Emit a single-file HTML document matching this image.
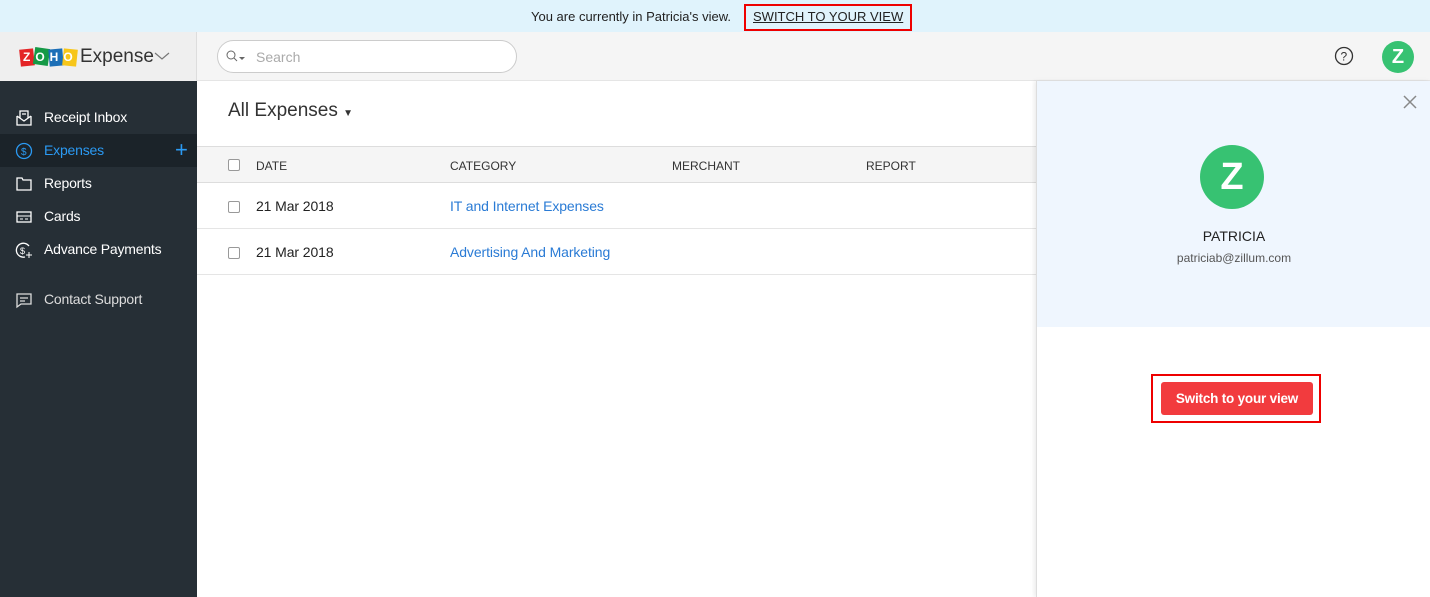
<!DOCTYPE html>
<html><head><style>
*{box-sizing:border-box;margin:0;padding:0}
body{width:1430px;height:597px;overflow:hidden;font-family:"Liberation Sans",sans-serif;background:#fff;position:relative;color:#222}
.banner{position:absolute;top:0;left:0;width:1430px;height:32px;background:#e0f3fc;font-size:13px;}
.banner .t{position:absolute;left:531px;top:9px}
.banner .b{position:absolute;left:744px;top:4px;width:168px;height:27px;border:2px solid #e00;padding:3px 0 0 7px;text-decoration:underline}
.side{position:absolute;top:32px;left:0;width:197px;height:565px;background:#262f36}
.logo{height:49px;background:#efefef;border-right:1px solid #ddd;position:relative}
.nav{position:absolute;left:0;width:197px;height:33px;color:#fff;font-size:14px;letter-spacing:-0.2px}
.nav span{position:absolute;left:44px;top:8px}
.nav svg{position:absolute;left:15px;top:8px}
.top{position:absolute;top:32px;left:197px;right:0;height:49px;background:#f5f5f5;border-bottom:1px solid #e5e5e5}
.search{position:absolute;left:20px;top:8px;width:300px;height:33px;border:1px solid #ccc;border-radius:17px;background:#fff}
.main{position:absolute;left:197px;top:81px;width:840px;height:516px}
.hdr{position:absolute;top:65px;left:0;width:840px;height:37px;background:#f5f5f5;border-top:1px solid #ddd;border-bottom:1px solid #ddd;font-size:12px;color:#333}
.row{position:absolute;left:0;width:840px;height:46px;border-bottom:1px solid #e5e5e5;font-size:14px;letter-spacing:-0.1px}
.cb{position:absolute;left:31px;width:12px;height:12px;border:1px solid #999;border-radius:2px;background:#fff}
.panel{position:absolute;left:1036px;top:81px;width:394px;height:516px;background:#fff;border-left:1px solid #ddd;box-shadow:-2px 0 4px rgba(0,0,0,.08)}
.pt{height:246px;background:#eff6fe;position:relative}
</style></head><body>
<div class="banner"><span class="t">You are currently in Patricia's view.</span><span class="b">SWITCH TO YOUR VIEW</span></div>
<div class="side">
 <div class="logo">
  <div style="position:absolute;left:20px;top:16px;width:58px;height:19px">
   <span style="position:absolute;left:0;top:1px;width:14px;height:17px;background:#e42527;transform:rotate(-6deg)"></span>
   <span style="position:absolute;left:14px;top:0;width:15px;height:17px;background:#159a46;transform:rotate(8deg)"></span>
   <span style="position:absolute;left:29px;top:1px;width:14px;height:17px;background:#1c6fb7;transform:rotate(-5deg)"></span>
   <span style="position:absolute;left:43px;top:1px;width:14px;height:17px;background:#f7c61a;transform:rotate(6deg)"></span>
   <span style="position:absolute;left:3px;top:2px;font:bold 12px 'Liberation Sans';color:#fff;letter-spacing:5px">ZOHO</span>
  </div>
  <span style="position:absolute;left:80px;top:14px;font-size:19px;color:#333">Expense</span>
  <svg style="position:absolute;left:154px;top:20px" width="16" height="9"><path d="M1 1l7 6 7-6" fill="none" stroke="#777" stroke-width="1.2"/></svg>
 </div>
 <div class="nav" style="top:69px"><svg width="18" height="18"><path d="M2 7v9h14V7M2 7l7 5 7-5M5 9V2h8v7M7 5h4" fill="none" stroke="#fff" stroke-width="1.3"/></svg><span>Receipt Inbox</span></div>
 <div class="nav" style="top:102px;background:#1b2329;color:#2b9af3"><svg width="18" height="18"><circle cx="9" cy="9" r="7.5" fill="none" stroke="#2b9af3" stroke-width="1.3"/><text x="6" y="13" font-size="10" fill="#2b9af3">$</text></svg><span>Expenses</span><span style="left:175px;top:3px;font-size:22px">+</span></div>
 <div class="nav" style="top:135px"><svg width="18" height="18"><path d="M2 3h5l1 2h8v10H2z" fill="none" stroke="#fff" stroke-width="1.3"/></svg><span>Reports</span></div>
 <div class="nav" style="top:168px"><svg width="18" height="18"><rect x="2" y="4" width="14" height="10" fill="none" stroke="#fff" stroke-width="1.3"/><path d="M2 8h14M5 11h3M10 11h3" stroke="#fff"/></svg><span>Cards</span></div>
 <div class="nav" style="top:201px"><svg width="18" height="18"><path d="M14 5A7 7 0 1 0 10 16" fill="none" stroke="#fff" stroke-width="1.3"/><text x="5" y="13" font-size="9" fill="#fff">$</text><path d="M14 11v6M11 14h6" stroke="#fff"/></svg><span>Advance Payments</span></div>
 <div class="nav" style="top:251px;color:#ddd"><svg width="18" height="18"><path d="M2 3h14v10H6l-4 3z M5 7h8M5 10h5" fill="none" stroke="#ddd" stroke-width="1.3"/></svg><span>Contact Support</span></div>
</div>
<div class="top">
 <div class="search"><svg style="position:absolute;left:8px;top:9px" width="20" height="14"><circle cx="5" cy="5" r="4" fill="none" stroke="#666"/><path d="M8 8l3 3" stroke="#666"/><path d="M13 7h6l-3 3z" fill="#666"/></svg><span style="position:absolute;left:38px;top:8px;font-size:14px;color:#aaa">Search</span></div>
 <svg style="position:absolute;left:1137px;top:14px" width="20" height="20"><circle cx="10" cy="10" r="8.5" fill="none" stroke="#333" stroke-width="1.3"/><text x="6.5" y="14.5" font-size="12" fill="#333">?</text></svg>
 <div style="position:absolute;left:1185px;top:9px;width:32px;height:32px;border-radius:50%;background:#37c272;color:#fff;font:bold 20px 'Liberation Sans';text-align:center;line-height:32px">Z</div>
</div>
<div class="main">
 <div style="position:absolute;left:31px;top:19px;font-size:19px;color:#333">All Expenses <span style="font-size:10px">▼</span></div>
 <div class="hdr"><div class="cb" style="top:12px"></div><span style="position:absolute;left:59px;top:12px">DATE</span><span style="position:absolute;left:253px;top:12px">CATEGORY</span><span style="position:absolute;left:475px;top:12px">MERCHANT</span><span style="position:absolute;left:669px;top:12px">REPORT</span></div>
 <div class="row" style="top:102px"><div class="cb" style="top:18px"></div><span style="position:absolute;left:59px;top:15px">21 Mar 2018</span><span style="position:absolute;left:253px;top:15px;color:#2a7bd5">IT and Internet Expenses</span></div>
 <div class="row" style="top:148px"><div class="cb" style="top:18px"></div><span style="position:absolute;left:59px;top:15px">21 Mar 2018</span><span style="position:absolute;left:253px;top:15px;color:#2a7bd5">Advertising And Marketing</span></div>
</div>
<div class="panel">
 <div class="pt">
  <svg style="position:absolute;left:366px;top:14px" width="14" height="14"><path d="M1 1l12 12M13 1L1 13" stroke="#888" stroke-width="1.5"/></svg>
  <div style="position:absolute;left:163px;top:64px;width:64px;height:64px;border-radius:50%;background:#37c272;color:#fff;font:bold 38px 'Liberation Sans';text-align:center;line-height:64px">Z</div>
  <div style="position:absolute;left:0;width:394px;top:147px;text-align:center;font-size:14px;color:#222">PATRICIA</div>
  <div style="position:absolute;left:0;width:394px;top:170px;text-align:center;font-size:12px;color:#555">patriciab@zillum.com</div>
 </div>
 <div style="position:absolute;left:114px;top:293px;width:170px;height:49px;border:2px solid #e00"></div>
 <div style="position:absolute;left:124px;top:301px;width:152px;height:33px;background:#f23b3e;border-radius:3px;color:#fff;font:bold 13.5px 'Liberation Sans';letter-spacing:-0.2px;text-align:center;line-height:33px">Switch to your view</div>
</div>
</body></html>
